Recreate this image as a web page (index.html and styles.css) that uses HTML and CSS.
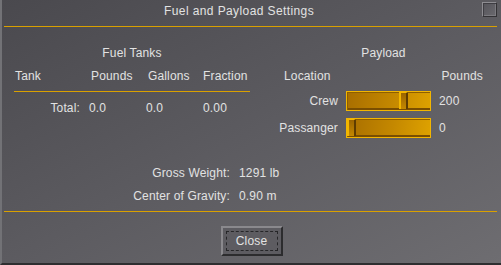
FILE: index.html
```html
<!DOCTYPE html>
<html>
<head>
<meta charset="utf-8">
<title>Fuel and Payload Settings</title>
<link rel="stylesheet" href="styles.css">
</head>
<body>
<div class="dialog">
  <div class="titlebar">
    <span class="title">Fuel and Payload Settings</span>
    <span class="closebox"></span>
  </div>
  <div class="rule"></div>
  <div class="main">
    <section class="fuel">
      <div class="heading">Fuel Tanks</div>
      <div class="fuel-head">
        <span>Tank</span><span>Pounds</span><span>Gallons</span><span>Fraction</span>
      </div>
      <div class="fuel-rule"></div>
      <div class="fuel-total">
        <span class="total-label">Total:</span><span>0.0</span><span>0.0</span><span>0.00</span>
      </div>
    </section>
    <section class="payload">
      <div class="heading">Payload</div>
      <div class="payload-head"><span>Location</span><span>Pounds</span></div>
      <div class="payload-rows">
        <span class="plabel">Crew</span>
        <div class="slider"><div class="thumb" style="left:52px"></div></div>
        <span>200</span>
        <span class="plabel">Passanger</span>
        <div class="slider"><div class="thumb" style="left:0px"></div></div>
        <span>0</span>
      </div>
    </section>
  </div>
  <div class="summary">
    <span class="slabel">Gross Weight:</span><span>1291 lb</span>
    <span class="slabel">Center of Gravity:</span><span>0.90 m</span>
  </div>
  <div class="rule"></div>
  <div class="buttons">
    <button class="btn" type="button"><span class="focus">Close</span></button>
  </div>
</div>
</body>
</html>
```

FILE: styles.css
```css
html, body {
  margin: 0;
  padding: 0;
}
body {
  font-family: "Liberation Sans", Arial, sans-serif;
  font-size: 12px;
  line-height: 14px;
  letter-spacing: 0.15px;
  color: #e2e2e2;
  background: #5c5b60;
}
.dialog {
  width: 501px;
  height: 265px;
  box-sizing: border-box;
  border-left: 2px solid #727276;
  border-bottom: 2px solid #2e2e30;
  background: linear-gradient(to bottom right, #4a494e, #5c5b60 50%, #6e6d71);
  display: flex;
  flex-direction: column;
  overflow: hidden;
}
.titlebar {
  height: 26px;
  display: flex;
  align-items: flex-start;
}
.title {
  margin-left: 162px;
  padding-top: 4px;
  letter-spacing: 0.4px;
  white-space: nowrap;
}
.closebox {
  margin-left: auto;
  margin-right: 4px;
  margin-top: 2px;
  width: 15px;
  height: 15px;
  box-sizing: border-box;
  border: 1px solid;
  border-color: #8e8d92 #333235 #333235 #8e8d92;
  box-shadow: inset 1px 1px 0 #3f3e43, inset -1px -1px 0 #7c7b80;
  background: linear-gradient(to bottom right, #55545a, #6a696e);
}
.rule {
  height: 1px;
  background: #d9a000;
  margin: 0 4px 0 2px;
  flex: none;
}
.main {
  display: flex;
  flex: none;
}
.fuel {
  margin-left: 12px;
  width: 236px;
  padding-top: 19px;
}
.heading {
  text-align: center;
  height: 14px;
}
.fuel-head {
  margin-top: 9px;
  display: grid;
  grid-template-columns: 76px 57px 55px auto;
  padding-left: 1px;
}
.fuel-rule {
  margin-top: 8px;
  height: 1px;
  background: #d9a000;
}
.fuel-total {
  margin-top: 9px;
  display: grid;
  grid-template-columns: 74px 57px 57px auto;
  padding-left: 1px;
}
.total-label {
  text-align: right;
  padding-right: 9px;
}
.payload {
  margin-left: 26px;
  width: 207px;
  padding-top: 19px;
}
.payload .heading {
  padding-left: 8px;
}
.payload-head {
  margin-top: 9px;
  padding-left: 8px;
  display: flex;
  justify-content: space-between;
}
.payload-rows {
  margin-top: 8px;
  display: grid;
  grid-template-columns: 62px 85px auto;
  grid-auto-rows: 20px;
  column-gap: 8px;
  row-gap: 7px;
  align-items: center;
}
.plabel {
  text-align: right;
}
.slider {
  position: relative;
  height: 20px;
  box-sizing: border-box;
  border: 1px solid #f2b600;
  box-shadow: inset 1px 1px 0 #8e5e00, inset 0 -2px 0 #7a4e00;
  background: linear-gradient(100deg, #a86e00, #c48800 55%, #dea200);
}
.thumb {
  position: absolute;
  top: 0;
  bottom: 1px;
  width: 9px;
  box-sizing: border-box;
  border-left: 2px solid #f2b600;
  border-top: 1px solid #f2b600;
  border-right: 2px solid #5e3c00;
  background: linear-gradient(to bottom, #9a6400, #c48800);
}
.summary {
  margin-top: 28px;
  display: grid;
  grid-template-columns: 228px auto;
  column-gap: 9px;
  row-gap: 9px;
  flex: none;
}
.summary + .rule {
  margin-top: 8px;
}
.slabel {
  text-align: right;
}
.buttons {
  margin-top: 14px;
  display: flex;
  justify-content: center;
}
.btn {
  width: 62px;
  height: 30px;
  box-sizing: border-box;
  padding: 0;
  margin: 0;
  border: 2px solid;
  border-color: #8a898d #2c2c2e #2c2c2e #8a898d;
  background: #5d5c61;
  font: inherit;
  letter-spacing: inherit;
  color: inherit;
  display: flex;
}
.focus {
  flex: 1;
  margin: 3px;
  border: 1px dashed #262628;
  line-height: 18px;
  text-align: center;
}
```
